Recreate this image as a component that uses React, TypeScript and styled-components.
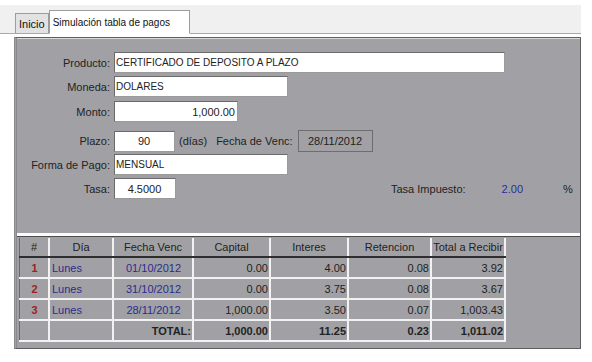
import React from 'react'
import styled, { createGlobalStyle } from 'styled-components'

const Global = createGlobalStyle`
body { margin: 0; background: #ffffff; font-family: "Liberation Sans", Arial, sans-serif; font-size: 11px; color: #222; }
`

const Page = styled.div`width: 581px; padding-top: 5px;`

const TabStrip = styled.div`display: flex; align-items: flex-end; height: 28px; background: #f0f0f0; border-bottom: 1px solid #a8a8a8; padding-left: 15px;`

const Tab = styled.div<{ $active?: boolean }>`
height: ${p => (p.$active ? '24px' : '20px')};
margin-bottom: ${p => (p.$active ? '-1px' : '0')};
padding: 0 ${p => (p.$active ? '19px' : '3px')} 0 3px;
display: flex; align-items: center; font-size: ${p => (p.$active ? '10px' : '11px')};
background: ${p => (p.$active ? '#ffffff' : '#e2e2e2')};
border: 1px solid #9c9c9c; border-bottom: ${p => (p.$active ? '1px solid #ffffff' : 'none')};
color: #111; box-sizing: border-box;
`

const Body = styled.div`padding: 3px 0 0 14px;`

const Panel = styled.div`height: 312px; box-sizing: border-box; border: 1px solid #5f5f5f; border-left: 3px double #8a8a8a; background: #a1a1a5; display: flex; flex-direction: column;`

const Form = styled.div`height: 195px; box-sizing: border-box; padding-top: 13px; border-top: 1px solid #d8d8d8;`

const Row = styled.div<{ $gap?: number }>`display: flex; align-items: center; margin-top: ${p => p.$gap || 0}px;`

const Label = styled.div`width: 93px; text-align: right; padding-right: 4px;`

const Input = styled.div<{ $w: number; $align?: string; $caps?: boolean }>`
width: ${p => p.$w}px; height: 21px; box-sizing: border-box; background: #fff;
border: 1px solid #6a6a6a; border-right-color: #9a9a9a; border-bottom-color: #9a9a9a;
display: flex; align-items: center; padding: 0 2px 0 1px;
font-size: ${p => (p.$caps ? '10px' : '11px')};
justify-content: ${p => p.$align || 'flex-start'};
`

const Info = styled.div<{ $ml?: number; $color?: string }>`margin-left: ${p => p.$ml || 0}px; color: ${p => p.$color || '#222'};`

const DateBox = styled.div`margin-left: 5px; width: 75px; height: 22px; box-sizing: border-box; border: 1px solid #6e6e6e; display: flex; align-items: center; justify-content: center;`

const Separator = styled.div`height: 3px; background: #fbfbfb;`

const TableArea = styled.div`flex: 1; border-top: 1px solid #4e4e4e; padding: 1px 0 0 2px;`

const Grid = styled.table`border-collapse: collapse; table-layout: fixed; border-left: 1px solid #6a6a6a;`

const Th = styled.th<{ $w: number }>`
width: ${p => p.$w}px; height: 18px; padding: 0; font-weight: normal; color: #222;
border-right: 2px solid #f2f2f2; border-bottom: 2px solid #2e2e2e; text-align: center;
`

const Td = styled.td<{ $align?: string; $color?: string; $bold?: boolean }>`
height: 19px; padding: 0 1px 0 2px; text-align: ${p => p.$align || 'right'};
color: ${p => p.$color || '#222'}; font-weight: ${p => (p.$bold ? 'bold' : 'normal')};
border-right: 2px solid #f2f2f2; border-bottom: 2px solid #f2f2f2;
`

const cols = [
  { t: '#', w: 28 },
  { t: 'Día', w: 62 },
  { t: 'Fecha Venc', w: 78 },
  { t: 'Capital', w: 75 },
  { t: 'Interes', w: 76 },
  { t: 'Retencion', w: 81 },
  { t: 'Total a Recibir', w: 72 },
]

const rows = [
  ['1', 'Lunes', '01/10/2012', '0.00', '4.00', '0.08', '3.92'],
  ['2', 'Lunes', '31/10/2012', '0.00', '3.75', '0.08', '3.67'],
  ['3', 'Lunes', '28/11/2012', '1,000.00', '3.50', '0.07', '1,003.43'],
]

function App() {
  return (
    <Page>
      <Global />
      <TabStrip>
        <Tab>Inicio</Tab>
        <Tab $active>Simulación tabla de pagos</Tab>
      </TabStrip>
      <Body>
        <Panel>
          <Form>
            <Row>
              <Label>Producto:</Label>
              <Input $w={391} $caps>CERTIFICADO DE DEPOSITO A PLAZO</Input>
            </Row>
            <Row $gap={3}>
              <Label>Moneda:</Label>
              <Input $w={174} $caps>DOLARES</Input>
            </Row>
            <Row $gap={4}>
              <Label>Monto:</Label>
              <Input $w={124} $align="flex-end">1,000.00</Input>
            </Row>
            <Row $gap={8}>
              <Label>Plazo:</Label>
              <Input $w={61} $align="center">90</Input>
              <Info $ml={4}>(días)</Info>
              <Info $ml={9}>Fecha de Venc:</Info>
              <DateBox>28/11/2012</DateBox>
            </Row>
            <Row $gap={2}>
              <Label>Forma de Pago:</Label>
              <Input $w={174} $caps>MENSUAL</Input>
            </Row>
            <Row $gap={3}>
              <Label>Tasa:</Label>
              <Input $w={62} $align="center">4.5000</Input>
              <Info $ml={215}>Tasa Impuesto:</Info>
              <Info $ml={36} $color="#2b2b9c">2.00</Info>
              <Info $ml={40}>%</Info>
            </Row>
          </Form>
          <Separator />
          <TableArea>
            <Grid>
              <thead>
                <tr>
                  {cols.map(c => (
                    <Th key={c.t} $w={c.w}>{c.t}</Th>
                  ))}
                </tr>
              </thead>
              <tbody>
                {rows.map(r => (
                  <tr key={r[0]}>
                    <Td $align="center" $color="#a02020" $bold>{r[0]}</Td>
                    <Td $align="left" $color="#2b2b8f">{r[1]}</Td>
                    <Td $align="center" $color="#2b2b8f">{r[2]}</Td>
                    <Td>{r[3]}</Td>
                    <Td>{r[4]}</Td>
                    <Td>{r[5]}</Td>
                    <Td>{r[6]}</Td>
                  </tr>
                ))}
                <tr>
                  <Td />
                  <Td />
                  <Td $bold>TOTAL:</Td>
                  <Td $bold>1,000.00</Td>
                  <Td $bold>11.25</Td>
                  <Td $bold>0.23</Td>
                  <Td $bold>1,011.02</Td>
                </tr>
              </tbody>
            </Grid>
          </TableArea>
        </Panel>
      </Body>
    </Page>
  )
}

export default App
